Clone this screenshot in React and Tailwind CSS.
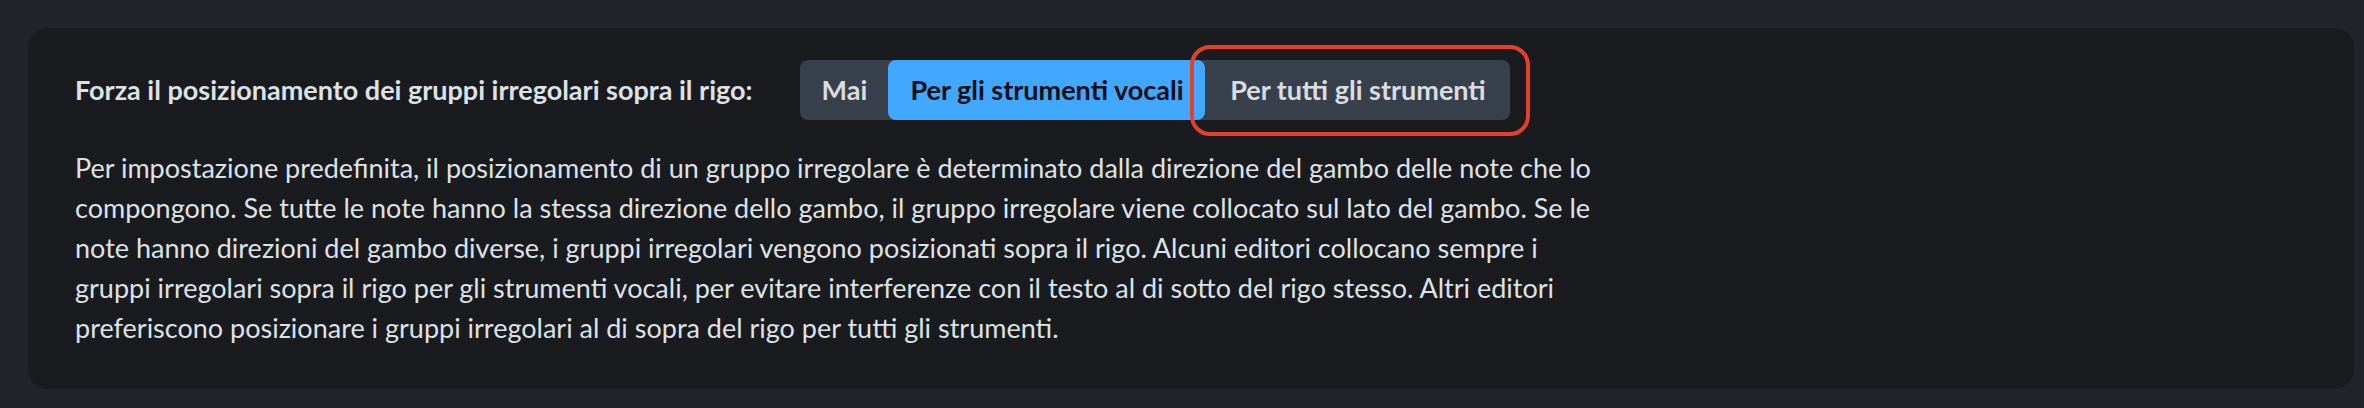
import { useState } from 'react'

const options = [
  { id: 'never', label: 'Mai', width: 'w-[88px]' },
  { id: 'vocal', label: 'Per gli strumenti vocali', width: 'w-[317px]' },
  { id: 'all', label: 'Per tutti gli strumenti', width: 'w-[305px]' },
]

const lines = [
  'Per impostazione predefinita, il posizionamento di un gruppo irregolare è determinato dalla direzione del gambo delle note che lo',
  'compongono. Se tutte le note hanno la stessa direzione dello gambo, il gruppo irregolare viene collocato sul lato del gambo. Se le',
  'note hanno direzioni del gambo diverse, i gruppi irregolari vengono posizionati sopra il rigo. Alcuni editori collocano sempre i',
  'gruppi irregolari sopra il rigo per gli strumenti vocali, per evitare interferenze con il testo al di sotto del rigo stesso. Altri editori',
  'preferiscono posizionare i gruppi irregolari al di sopra del rigo per tutti gli strumenti.',
]

export default function App() {
  const [value, setValue] = useState('vocal')

  return (
    <div className="h-screen bg-[#212428] pt-[28px] pl-[28px] pr-[10px] font-['Lato',sans-serif] text-[#dee2e6]">
      <div className="h-[361px] rounded-[20px] bg-[#191b1f] pl-[47px] pt-[32px]">
        <div className="flex items-center gap-[48px]">
          <span className="text-[27px] font-bold">Forza il posizionamento dei gruppi irregolari sopra il rigo:</span>
          <div className="flex h-[60px] rounded-[8px] bg-[#38404b]">
            {options.map(o => {
              const active = value === o.id
              return (
                <div key={o.id} className="relative">
                  <button
                    onClick={() => setValue(o.id)}
                    className={
                      active
                        ? `${o.width} h-full rounded-[8px] bg-[#42a8ff] text-[27px] font-bold text-[#0b0e12]`
                        : `${o.width} h-full text-[27px] font-bold text-[#d9dde2]`
                    }
                  >
                    {o.label}
                  </button>
                  {o.id === 'all' && (
                    <span className="pointer-events-none absolute -top-[15px] -bottom-[16px] -left-[15px] -right-[20px] rounded-[20px] border-4 border-[#e4412b]" />
                  )}
                </div>
              )
            })}
          </div>
        </div>
        <p className="mt-[28px] text-[27px] leading-[40px]">
          {lines.map((l, i) => (
            <span key={i} className="block whitespace-nowrap">{l}</span>
          ))}
        </p>
      </div>
    </div>
  )
}
